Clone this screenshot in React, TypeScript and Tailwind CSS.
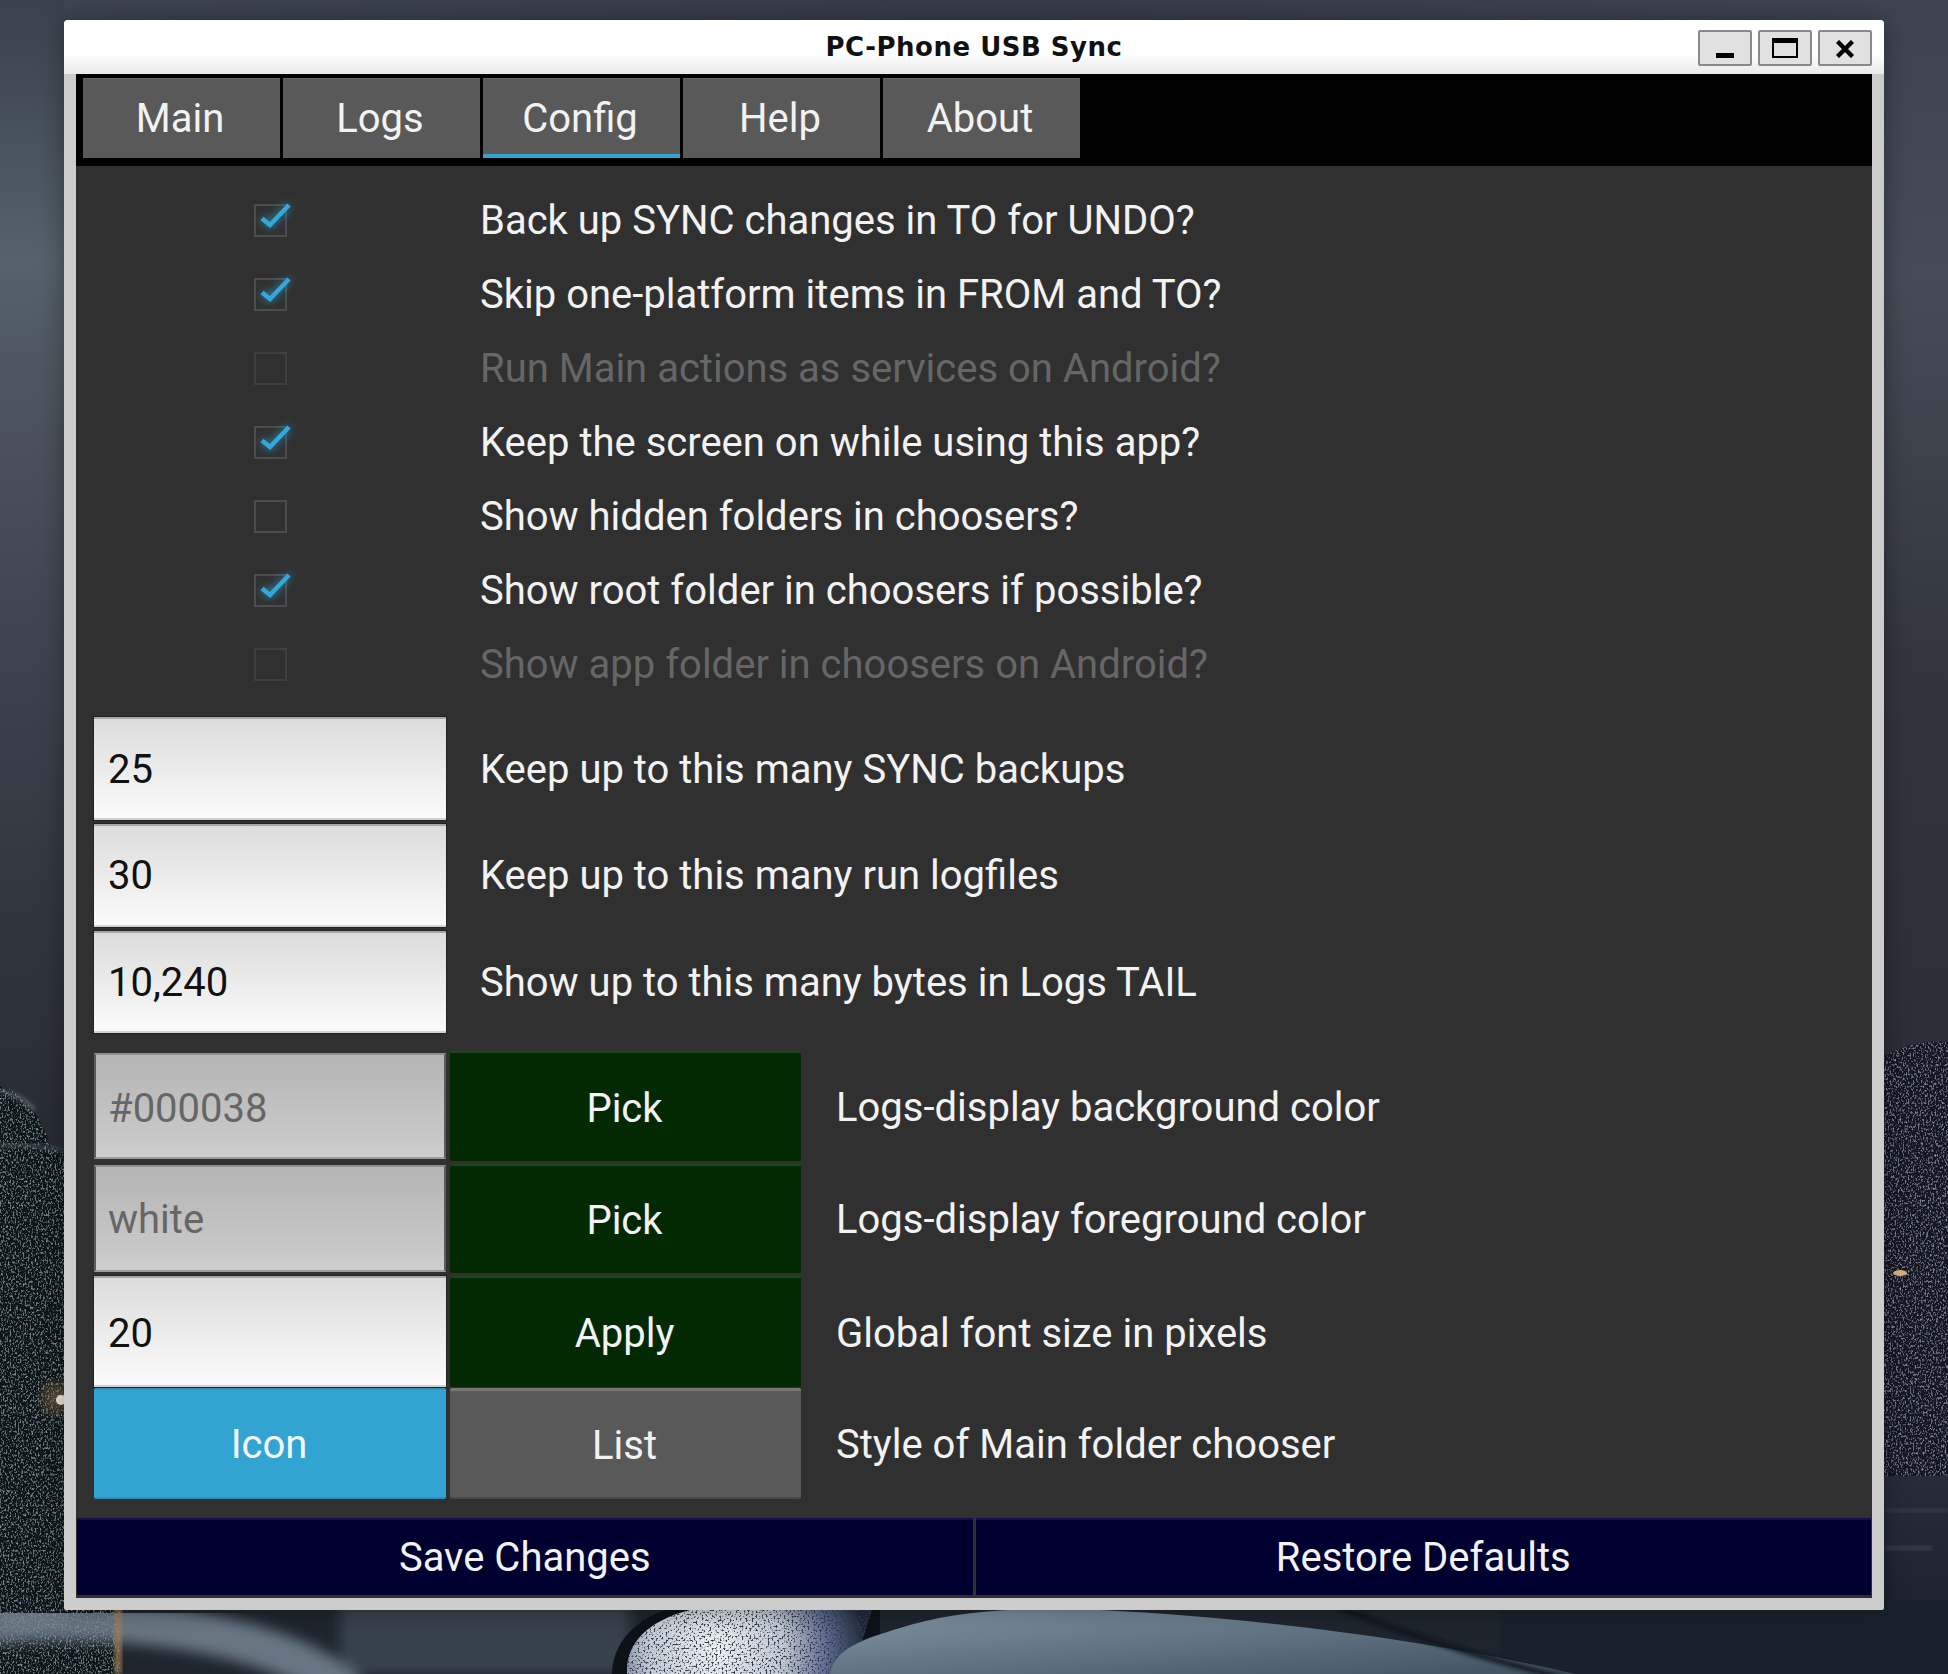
import React from "react";

const font = { fontFamily: "Roboto, sans-serif" };

function Wallpaper() {
  return (
    <svg className="absolute inset-0" width="1948" height="1674" viewBox="0 0 1948 1674">
      <defs>
        <linearGradient id="skyL" x1="0" y1="0" x2="0" y2="1">
          <stop offset="0" stopColor="#3a424c" />
          <stop offset="0.1" stopColor="#47515b" />
          <stop offset="0.2" stopColor="#55616b" />
          <stop offset="0.33" stopColor="#4b525b" />
          <stop offset="0.5" stopColor="#3d444f" />
          <stop offset="0.68" stopColor="#33373f" />
          <stop offset="1" stopColor="#20242b" />
        </linearGradient>
        <linearGradient id="skyT" x1="0" y1="0" x2="1" y2="0">
          <stop offset="0" stopColor="#3e4650" />
          <stop offset="0.5" stopColor="#363c46" />
          <stop offset="1" stopColor="#3f4650" />
        </linearGradient>
        <linearGradient id="skyR" x1="0" y1="0" x2="0" y2="1">
          <stop offset="0" stopColor="#3d444e" />
          <stop offset="0.25" stopColor="#464c56" />
          <stop offset="0.6" stopColor="#33363f" />
          <stop offset="1" stopColor="#2a2d35" />
        </linearGradient>
        <linearGradient id="ground" x1="0" y1="0" x2="0" y2="1">
          <stop offset="0" stopColor="#272c37" />
          <stop offset="0.6" stopColor="#1e2530" />
          <stop offset="1" stopColor="#19222c" />
        </linearGradient>
        <linearGradient id="boulder" x1="0" y1="0" x2="1" y2="1">
          <stop offset="0" stopColor="#8496a3" />
          <stop offset="0.5" stopColor="#5e7180" />
          <stop offset="1" stopColor="#3d4c59" />
        </linearGradient>
        <radialGradient id="dome" gradientUnits="userSpaceOnUse" cx="715" cy="1650" r="150">
          <stop offset="0" stopColor="#eef1f4" />
          <stop offset="0.45" stopColor="#c3cad3" />
          <stop offset="0.75" stopColor="#5e6a90" />
          <stop offset="1" stopColor="#20283a" />
        </radialGradient>
        <filter id="rock" x="0" y="0" width="100%" height="100%">
          <feTurbulence type="fractalNoise" baseFrequency="0.6 0.42" numOctaves="2" seed="4" result="n" />
          <feColorMatrix in="n" type="matrix" values="0 0 0 0 0.3  0 0 0 0 0.36  0 0 0 0 0.45  2.6 0 0 0 -1.35" />
          <feComposite in2="SourceGraphic" operator="in" result="s" />
          <feMerge>
            <feMergeNode in="SourceGraphic" />
            <feMergeNode in="s" />
          </feMerge>
        </filter>
        <filter id="speck" x="0" y="0" width="100%" height="100%">
          <feTurbulence type="fractalNoise" baseFrequency="0.5" numOctaves="2" seed="9" result="n" />
          <feColorMatrix in="n" type="matrix" values="0 0 0 0 0.03  0 0 0 0 0.05  0 0 0 0 0.08  6 0 0 0 -3" />
          <feComposite in2="SourceGraphic" operator="in" result="s" />
          <feMerge>
            <feMergeNode in="SourceGraphic" />
            <feMergeNode in="s" />
          </feMerge>
        </filter>
        <filter id="soft"><feGaussianBlur stdDeviation="7" /></filter>
        <filter id="soft2"><feGaussianBlur stdDeviation="2" /></filter>
      </defs>

      <rect x="0" y="0" width="1948" height="1674" fill="#1b2129" />
      <rect x="0" y="0" width="1948" height="24" fill="url(#skyT)" />
      <rect x="0" y="0" width="64" height="1300" fill="url(#skyL)" />
      <rect x="1884" y="0" width="64" height="1100" fill="url(#skyR)" />

      {/* left rocks */}
      <path d="M0 1086 C18 1090 40 1110 50 1146 L70 1152 L70 1640 L0 1640 Z" fill="#0f1218" filter="url(#rock)" />
      <path d="M0 1090 C14 1094 26 1100 34 1110" fill="none" stroke="#7f8f9f" strokeWidth="3" opacity="0.7" filter="url(#soft2)" />
      <path d="M0 1146 C20 1142 44 1146 64 1152" fill="none" stroke="#6d7c8c" strokeWidth="3" opacity="0.6" filter="url(#soft2)" />
      <circle cx="58" cy="1398" r="16" fill="#8a6e4c" opacity="0.55" filter="url(#soft)" />
      <circle cx="61" cy="1400" r="5" fill="#f1ead8" />

      {/* right rocks */}
      <path d="M1880 1058 C1900 1046 1925 1040 1948 1042 L1948 1480 L1880 1476 Z" fill="#141924" filter="url(#rock)" />
      <rect x="1880" y="1476" width="68" height="198" fill="url(#ground)" />
      <rect x="1886" y="1509" width="62" height="3" fill="#4a505c" opacity="0.6" filter="url(#soft2)" />
      <rect x="1886" y="1546" width="46" height="4" fill="#4a505c" opacity="0.7" filter="url(#soft2)" />
      <ellipse cx="1900" cy="1273" rx="7" ry="3" fill="#d8b27c" />

      {/* bottom strip */}
      <rect x="0" y="1600" width="1948" height="74" fill="#1e252d" />
      <rect x="1500" y="1600" width="448" height="74" fill="#19222c" />
      <rect x="0" y="1600" width="120" height="74" fill="#0f1218" filter="url(#rock)" />
      <rect x="340" y="1600" width="290" height="74" fill="#37424d" filter="url(#soft)" />
      <path d="M-10 1624 C120 1612 280 1632 350 1694" fill="none" stroke="#7a8b99" strokeWidth="40" opacity="0.8" filter="url(#soft)" />
      <rect x="114" y="1606" width="8" height="68" fill="#a57f58" opacity="0.7" filter="url(#soft2)" />
      <path d="M612 1680 C610 1650 628 1618 680 1606 L880 1606 L880 1680 Z" fill="#0d1218" />
      <path d="M628 1680 C622 1650 642 1622 690 1610 L872 1610 L850 1680 Z" fill="url(#dome)" filter="url(#speck)" />
      <path d="M830 1680 C830 1650 860 1640 900 1628 C950 1612 1010 1606 1100 1610 C1300 1620 1480 1650 1600 1680 Z" fill="url(#boulder)" />
      <path d="M1340 1608 C1420 1640 1520 1670 1620 1690" fill="none" stroke="#11161c" strokeWidth="5" filter="url(#soft2)" />
    </svg>
  );
}

function Check({ checked, disabled }: { checked?: boolean; disabled?: boolean }) {
  return (
    <div className={`relative w-[33px] h-[33px] border-2 ${disabled ? "border-[#3f3f3f]" : "border-[#4c4c4c]"}`}>
      {checked && (
        <svg className="absolute left-[-2px] top-[-3px] overflow-visible [filter:drop-shadow(0_0_5px_rgba(49,164,209,0.9))]" width="33" height="33">
          <path d="M8 15.5 L16 22 L35 2" fill="none" stroke="#31a9dc" strokeWidth="4.5" />
        </svg>
      )}
    </div>
  );
}

function CheckRow({ label, checked, disabled }: { label: string; checked?: boolean; disabled?: boolean }) {
  return (
    <div className="flex items-center h-[74px]">
      <div className="w-[352px] flex justify-center">
        <Check checked={checked} disabled={disabled} />
      </div>
      <div className={`ml-[34px] pt-[1px] text-[40px] ${disabled ? "text-[#666666]" : "text-[#f2f2f2]"}`}>{label}</div>
    </div>
  );
}

function Field({ value, disabled, className }: { value: string; disabled?: boolean; className: string }) {
  return (
    <div
      className={`w-[352px] flex items-center text-[40px] border-y-2 ${className} ${
        disabled
          ? "pl-[12px] bg-gradient-to-b from-[#b4b4b4] to-[#cdcdcd] border-t-[#8f8f8f] border-b-[#9c9c9c] text-[#666666] border-x-2 border-x-[#5d5d5d]"
          : "pl-[14px] bg-gradient-to-b from-[#dcdcdc] to-[#fbfbfb] border-t-[#a6a6a6] border-b-[#d2d2d2] text-[#111111] shadow-[0_0_0_1px_#222222]"
      }`}
    >
      {value}
    </div>
  );
}

function GreenButton({ label }: { label: string }) {
  return (
    <div className="w-[351px] flex items-center justify-center pt-[3px] pr-[2px] bg-[#022902] border-t-2 border-t-[#1b471b] rounded-[2px] text-[40px] text-[#f2f2f2]">
      {label}
    </div>
  );
}

function Tab({ label, active }: { label: string; active?: boolean }) {
  return (
    <div className={`w-[197px] h-[80px] flex items-center justify-center pr-[3px] bg-[#595959] border-t border-t-[#666666] text-[40px] text-[#f2f2f2] ${active ? "shadow-[inset_0_-4px_0_#31a4d1]" : ""}`}>
      {label}
    </div>
  );
}

function WinButton({ children }: { children: React.ReactNode }) {
  return (
    <div className="relative w-[54px] h-[36px] bg-[#e1e1e1] border-2 border-[#8a8a8a] rounded-[2px]">{children}</div>
  );
}

function Label({ children, className }: { children: React.ReactNode; className: string }) {
  return <div className={`flex items-center text-[40px] text-[#f2f2f2] ${className}`}>{children}</div>;
}

export default function App() {
  return (
    <div className="relative w-[1948px] h-[1674px] overflow-hidden bg-[#1b2129]" style={font}>
      <Wallpaper />
      <div className="relative pl-[64px] pt-[20px]">
        <div className="w-[1820px] h-[1590px] flex flex-col bg-[#cccccc] rounded-tl-[4px] rounded-tr-[4px] rounded-bl-[2px] rounded-br-[2px] shadow-[0_0_24px_rgba(0,0,0,0.35)]">
          <div className="relative h-[54px] shrink-0 rounded-t-[4px] bg-[linear-gradient(180deg,#ffffff_0%,#ffffff_62%,#e9e9e9_100%)]">
            <div className="h-[54px] flex items-center justify-center text-[26px] font-bold text-[#111111] tracking-[0.5px]" style={{ fontFamily: '"DejaVu Sans", sans-serif' }}>
              PC-Phone USB Sync
            </div>
            <div className="absolute right-[12px] top-[10px] flex gap-[6px]">
              <WinButton>
                <div className="absolute left-[16px] top-[21px] w-[18px] h-[5px] bg-[#000000]" />
              </WinButton>
              <WinButton>
                <div className="absolute left-[12px] top-[6px] w-[26px] h-[20px] border-2 border-t-[5px] border-black" />
              </WinButton>
              <WinButton>
                <svg className="absolute left-[16px] top-[8px]" width="18" height="18" viewBox="0 0 18 18">
                  <path d="M1.5 1.5 L16.5 16.5 M16.5 1.5 L1.5 16.5" stroke="#000" strokeWidth="4.4" fill="none" />
                </svg>
              </WinButton>
            </div>
          </div>

          <div className="mx-[12px] flex-1 flex flex-col bg-[#303030] mb-[12px]">
            <div className="h-[92px] shrink-0 bg-black pt-[4px] pl-[7px] flex gap-[3px]">
              <Tab label="Main" />
              <Tab label="Logs" />
              <Tab label="Config" active />
              <Tab label="Help" />
              <Tab label="About" />
            </div>

            <div className="flex-1 pl-[18px] pt-[17px] flex flex-col">
              <CheckRow label="Back up SYNC changes in TO for UNDO?" checked />
              <CheckRow label="Skip one-platform items in FROM and TO?" checked />
              <CheckRow label="Run Main actions as services on Android?" disabled />
              <CheckRow label="Keep the screen on while using this app?" checked />
              <CheckRow label="Show hidden folders in choosers?" />
              <CheckRow label="Show root folder in choosers if possible?" checked />
              <CheckRow label="Show app folder in choosers on Android?" disabled />

              <div className="mt-[16px] flex flex-col gap-[4px]">
                <div className="flex items-stretch h-[103px]">
                  <Field value="25" className="pt-[3px]" />
                  <Label className="ml-[34px] pt-[3px]">Keep up to this many SYNC backups</Label>
                </div>
                <div className="flex items-stretch h-[103px]">
                  <Field value="30" className="pt-[1px]" />
                  <Label className="ml-[34px] pt-[1px]">Keep up to this many run logfiles</Label>
                </div>
                <div className="flex items-stretch h-[102px]">
                  <Field value="10,240" className="pt-[1px]" />
                  <Label className="ml-[34px] pt-[1px]">Show up to this many bytes in Logs TAIL</Label>
                </div>
              </div>

              <div className="mt-[18px] flex flex-col gap-[3px]">
                <div className="flex h-[110px] gap-[4px]">
                  <Field value="#000038" disabled className="my-[2px] pt-[5px]" />
                  <GreenButton label="Pick" />
                  <Label className="ml-[31px] pt-[4px]">Logs-display background color</Label>
                </div>
                <div className="flex h-[109px] gap-[4px]">
                  <Field value="white" disabled className="my-[1px] pt-[2px]" />
                  <GreenButton label="Pick" />
                  <Label className="ml-[31px] pt-[2px]">Logs-display foreground color</Label>
                </div>
                <div className="flex h-[111px] gap-[4px]">
                  <Field value="20" className="pt-[5px]" />
                  <GreenButton label="Apply" />
                  <Label className="ml-[31px] pt-[4px]">Global font size in pixels</Label>
                </div>
                <div className="flex h-[111px] gap-[4px] -mt-[2px]">
                  <div className="w-[352px] flex items-center justify-center pt-[3px] pr-[2px] bg-[#31a4d1] border-t-2 border-t-[#3c90b3] border-b-2 border-b-[#2f8fb8] rounded-[2px] text-[40px] text-[#f5f5f5]">Icon</div>
                  <div className="w-[351px] flex items-center justify-center pt-[3px] pr-[2px] bg-[#595959] border-t-[3px] border-t-[#767676] border-b-2 border-b-[#484848] rounded-[2px] text-[40px] text-[#f2f2f2]">List</div>
                  <Label className="ml-[31px] pt-[3px]">Style of Main folder chooser</Label>
                </div>
              </div>
            </div>

            <div className="h-[80px] shrink-0 flex gap-[3px] px-[1px] pb-[3px]">
              <div className="flex-1 flex items-center justify-center bg-[#000030] border-t-2 border-t-[#12124a] text-[40px] text-[#f2f2f2]">Save Changes</div>
              <div className="flex-1 flex items-center justify-center bg-[#000030] border-t-2 border-t-[#12124a] text-[40px] text-[#f2f2f2]">Restore Defaults</div>
            </div>
          </div>
        </div>
      </div>
    </div>
  );
}
